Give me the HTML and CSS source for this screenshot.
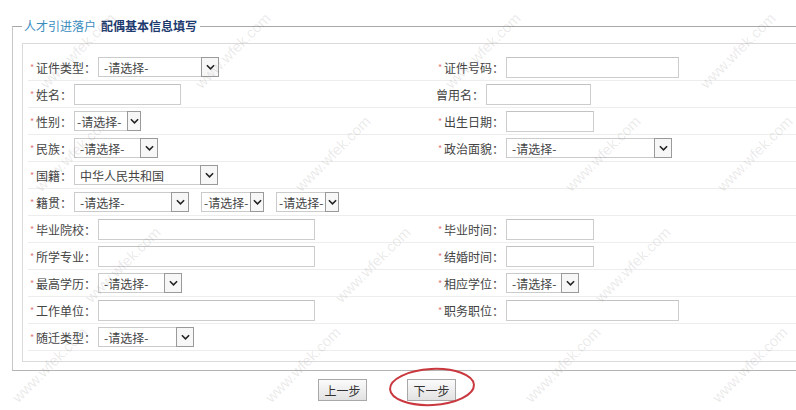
FILE: index.html
```html
<!DOCTYPE html>
<html lang="zh-CN">
<head>
    <meta charset="UTF-8">
    <title>配偶基本信息填写</title>
    <link rel="stylesheet" href="styles.css">
</head>
<body>
<div class="page">
    <fieldset class="panel">
        <legend><span class="legend-cat">人才引进落户</span><b class="legend-title">配偶基本信息填写</b></legend>
        <div class="form-box">
            <div class="row">
                <div class="cell"><span class="req">*</span><label>证件类型：</label><span class="select w121"><select><option>-请选择-</option></select><i class="arrow"><svg viewBox="0 0 10 6"><path d="M1 1l4 4 4-4"/></svg></i></span></div>
                <div class="cell"><span class="req">*</span><label>证件号码：</label><input type="text" class="w173"></div>
            </div>
            <div class="row">
                <div class="cell"><span class="req">*</span><label>姓名：</label><input type="text" class="w107"></div>
                <div class="cell"><label>曾用名：</label><input type="text" class="w105"></div>
            </div>
            <div class="row">
                <div class="cell"><span class="req">*</span><label>性别：</label><span class="select narrow w67"><select><option>-请选择-</option></select><i class="arrow"><svg viewBox="0 0 10 6"><path d="M1 1l4 4 4-4"/></svg></i></span></div>
                <div class="cell"><span class="req">*</span><label>出生日期：</label><input type="text" class="w88"></div>
            </div>
            <div class="row">
                <div class="cell"><span class="req">*</span><label>民族：</label><span class="select w84"><select><option>-请选择-</option></select><i class="arrow"><svg viewBox="0 0 10 6"><path d="M1 1l4 4 4-4"/></svg></i></span></div>
                <div class="cell"><span class="req">*</span><label>政治面貌：</label><span class="select w166"><select><option>-请选择-</option></select><i class="arrow"><svg viewBox="0 0 10 6"><path d="M1 1l4 4 4-4"/></svg></i></span></div>
            </div>
            <div class="row">
                <div class="cell"><span class="req">*</span><label>国籍：</label><span class="select w144"><select><option>中华人民共和国</option></select><i class="arrow"><svg viewBox="0 0 10 6"><path d="M1 1l4 4 4-4"/></svg></i></span></div>
                <div class="cell"></div>
            </div>
            <div class="row">
                <div class="cell"><span class="req">*</span><label>籍贯：</label>
                    <span class="select w115"><select><option>-请选择-</option></select><i class="arrow"><svg viewBox="0 0 10 6"><path d="M1 1l4 4 4-4"/></svg></i></span>
                    <span class="select narrow w63"><select><option>-请选择-</option></select><i class="arrow"><svg viewBox="0 0 10 6"><path d="M1 1l4 4 4-4"/></svg></i></span>
                    <span class="select narrow w63"><select><option>-请选择-</option></select><i class="arrow"><svg viewBox="0 0 10 6"><path d="M1 1l4 4 4-4"/></svg></i></span>
                </div>
                <div class="cell"></div>
            </div>
            <div class="row">
                <div class="cell"><span class="req">*</span><label>毕业院校：</label><input type="text" class="w217"></div>
                <div class="cell"><span class="req">*</span><label>毕业时间：</label><input type="text" class="w88"></div>
            </div>
            <div class="row">
                <div class="cell"><span class="req">*</span><label>所学专业：</label><input type="text" class="w217"></div>
                <div class="cell"><span class="req">*</span><label>结婚时间：</label><input type="text" class="w88"></div>
            </div>
            <div class="row">
                <div class="cell"><span class="req">*</span><label>最高学历：</label><span class="select w84"><select><option>-请选择-</option></select><i class="arrow"><svg viewBox="0 0 10 6"><path d="M1 1l4 4 4-4"/></svg></i></span></div>
                <div class="cell"><span class="req">*</span><label>相应学位：</label><span class="select w73"><select><option>-请选择-</option></select><i class="arrow"><svg viewBox="0 0 10 6"><path d="M1 1l4 4 4-4"/></svg></i></span></div>
            </div>
            <div class="row">
                <div class="cell"><span class="req">*</span><label>工作单位：</label><input type="text" class="w217"></div>
                <div class="cell"><span class="req">*</span><label>职务职位：</label><input type="text" class="w173"></div>
            </div>
            <div class="row">
                <div class="cell"><span class="req">*</span><label>随迁类型：</label><span class="select w96"><select><option>-请选择-</option></select><i class="arrow"><svg viewBox="0 0 10 6"><path d="M1 1l4 4 4-4"/></svg></i></span></div>
                <div class="cell"></div>
            </div>
        </div>
    </fieldset>

    <div class="actions">
        <button type="button" class="btn">上一步</button>
        <span class="marked">
            <button type="button" class="btn">下一步</button>
            <svg class="ring" viewBox="0 0 88 40"><ellipse cx="44" cy="20" rx="42" ry="18" transform="rotate(-3 44 20)"/></svg>
        </span>
    </div>

    <!-- site watermark -->
    <div class="watermarks">
        <span style="left:28px;top:42px">www.wfek.com</span>
        <span style="left:183px;top:42px">www.wfek.com</span>
        <span style="left:433px;top:42px">www.wfek.com</span>
        <span style="left:688px;top:42px">www.wfek.com</span>
        <span style="left:23px;top:145px">www.wfek.com</span>
        <span style="left:283px;top:145px">www.wfek.com</span>
        <span style="left:553px;top:145px">www.wfek.com</span>
        <span style="left:705px;top:145px">www.wfek.com</span>
        <span style="left:73px;top:256px">www.wfek.com</span>
        <span style="left:323px;top:256px">www.wfek.com</span>
        <span style="left:583px;top:256px">www.wfek.com</span>
        <span style="left:0px;top:356px">www.wfek.com</span>
        <span style="left:253px;top:356px">www.wfek.com</span>
        <span style="left:513px;top:356px">www.wfek.com</span>
        <span style="left:700px;top:356px">www.wfek.com</span>
    </div>
</div>
</body>
</html>
```

FILE: styles.css
```css
html, body {
    margin: 0;
    overflow: hidden;
    background: #fff;
}

body {
    font-family: "Noto Sans CJK SC", "Microsoft YaHei", sans-serif;
    font-size: 12px;
    color: #444;
}

.page {
    position: relative;
    width: 796px;
    height: 410px;
    overflow: hidden;
}

.panel {
    width: 840px;
    margin: 18px 0 0 12px;
    padding: 9px 0 8px 9px;
    border: 1px solid #c6c6c6;
    border-top-color: #a9a9a9;
    border-bottom-color: #b4b4b4;
    box-sizing: border-box;
}

.panel legend {
    padding: 0 3px 0 2px;
    line-height: 16px;
    white-space: nowrap;
}

.legend-cat {
    color: #3a8cbd;
    margin-right: 5px;
}

.legend-title {
    color: #1d3a6e;
    font-weight: bold;
}

.form-box {
    border: 1px solid #dadada;
    padding: 10px 0 10px 5px;
}

.row {
    display: grid;
    grid-template-columns: 408px 1fr;
    height: 27px;
    border-bottom: 1px solid #ededed;
    box-sizing: border-box;
}

.cell {
    display: flex;
    align-items: center;
    white-space: nowrap;
}

.req {
    width: 8px;
    color: #e27a7a;
    font-size: 9px;
    text-align: center;
}

label {
    color: #444;
    margin-right: 2px;
}

input[type="text"] {
    height: 21px;
    box-sizing: border-box;
    border: 1px solid #cdcdcd;
    border-top-color: #c2c2c2;
    padding: 0 3px;
    font: inherit;
    background: #fff;
}

.select {
    display: inline-flex;
    align-items: stretch;
    height: 20px;
    box-sizing: border-box;
    border: 1px solid #cbcbcb;
    background: #fff;
    margin-right: 12px;
}

.select select {
    flex: 1;
    min-width: 0;
    appearance: none;
    -webkit-appearance: none;
    border: none;
    background: transparent;
    padding: 0 0 0 5px;
    font: inherit;
    color: #444;
    outline: none;
}

.arrow {
    width: 16px;
    flex: none;
    display: flex;
    align-items: center;
    justify-content: center;
    border: 1px solid #9a9a9a;
    margin: -1px -1px -1px 0;
    background: #f7f7f7;
}

.arrow svg {
    width: 9px;
    height: 6px;
    fill: none;
    stroke: #222;
    stroke-width: 1.7;
}

.select.narrow select {
    padding-left: 2px;
}

.select.narrow .arrow {
    width: 12px;
}

.w67 { width: 67px; }
.w63 { width: 63px; }
.w73 { width: 73px; }
.w84 { width: 84px; }
.w88 { width: 88px; }
.w96 { width: 96px; }
.w105 { width: 105px; }
.w107 { width: 107px; }
.w115 { width: 115px; }
.w121 { width: 121px; }
.w144 { width: 144px; }
.w166 { width: 166px; }
.w173 { width: 173px; }
.w217 { width: 217px; }

.actions {
    display: flex;
    gap: 40px;
    margin-top: 8px;
    padding-left: 318px;
}

.btn {
    width: 49px;
    height: 22px;
    padding: 0;
    border: 1px solid #a8a8a8;
    background: linear-gradient(#fbfbfb, #e2e2e2);
    font: inherit;
    color: #333;
}

.marked {
    position: relative;
    display: inline-block;
}

.ring {
    position: absolute;
    left: -19px;
    top: -12px;
    width: 88px;
    height: 40px;
    fill: none;
    stroke: #c9383e;
    stroke-width: 2;
    pointer-events: none;
}

.watermarks {
    position: absolute;
    inset: 0;
    pointer-events: none;
}

.watermarks span {
    position: absolute;
    font-family: "Liberation Sans", sans-serif;
    font-size: 15px;
    color: rgba(120, 120, 120, 0.16);
    transform: rotate(-45deg);
    white-space: nowrap;
}
```
